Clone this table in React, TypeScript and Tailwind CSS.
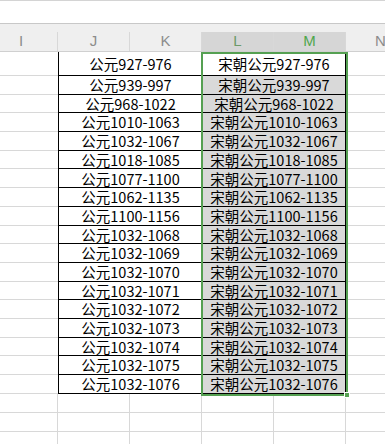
import React from "react"

const rows = [
  "927-976",
  "939-997",
  "968-1022",
  "1010-1063",
  "1032-1067",
  "1018-1085",
  "1077-1100",
  "1062-1135",
  "1100-1156",
  "1032-1068",
  "1032-1069",
  "1032-1070",
  "1032-1071",
  "1032-1072",
  "1032-1073",
  "1032-1074",
  "1032-1075",
  "1032-1076",
]

const cellFont = { fontFamily: '"Noto Sans CJK SC", "Noto Sans", sans-serif' }
const headFont = { fontFamily: '"Liberation Sans", Arial, sans-serif' }

function HeaderCell({ label, active, green }: { label: string; active?: boolean; green?: string }) {
  return (
    <div
      className={`w-[72px] shrink-0 h-full flex items-center justify-center border-r border-[#d8d8d8] text-[15px] ${
        active ? "bg-[#d6d6d6]" : ""
      }`}
      style={{ ...headFont, color: green ?? "#8c8c8c" }}
    >
      {label}
    </div>
  )
}

export default function App() {
  return (
    <div className="relative w-[385px] h-[444px] overflow-hidden bg-white">
      {/* toolbar strip */}
      <div className="h-[23px] border-t border-[#d4d4d4] bg-white" />
      <div className="h-[9px] border-t border-[#c8c8c8] bg-[#efefef]" />

      {/* column header */}
      <div className="flex h-[20px] bg-[#efefef] border-b border-[#d0d0d0]">
        <div className="w-[58px] shrink-0 h-full flex items-center pl-[19px] border-r border-[#d8d8d8] text-[15px] text-[#8c8c8c]" style={headFont}>
          I
        </div>
        <HeaderCell label="J" />
        <HeaderCell label="K" />
        <HeaderCell label="L" active green="#6d9a6a" />
        <HeaderCell label="M" active green="#4fa64c" />
        <div className="w-[39px] shrink-0 overflow-hidden flex items-center pl-[29px] text-[15px] text-[#8c8c8c]" style={headFont}>
          N
        </div>
      </div>

      {/* data rows */}
      {rows.map((r, i) => (
        <div key={r} className={`flex ${i === 0 ? "h-[24px]" : "h-[18.7px]"}`}>
          <div className="w-[58px] shrink-0 border-b border-[#d8d8d8]" />
          <div
            className="w-[144px] shrink-0 flex items-center justify-center pt-px border-l border-b border-black text-[14.5px] leading-none text-black"
            style={cellFont}
          >
            公元{r}
          </div>
          <div
            className={`w-[144px] shrink-0 flex items-center justify-center pt-px border-l border-r border-b border-black text-[14.5px] leading-none text-black ${
              i === 0 ? "bg-white" : "bg-[#d9d9d9]"
            }`}
            style={cellFont}
          >
            宋朝公元{r}
          </div>
          <div className="flex-1 border-b border-[#d8d8d8]" />
        </div>
      ))}

      {/* empty rows */}
      {[0, 1, 2].map((k) => (
        <div key={k} className="flex h-[19px]">
          <div className="w-[58px] shrink-0 border-r border-b border-[#d8d8d8]" />
          <div className="w-[72px] shrink-0 border-r border-b border-[#d8d8d8]" />
          <div className="w-[72px] shrink-0 border-r border-b border-[#d8d8d8]" />
          <div className="w-[72px] shrink-0 border-r border-b border-[#d8d8d8]" />
          <div className="w-[72px] shrink-0 border-r border-b border-[#d8d8d8]" />
          <div className="flex-1 border-b border-[#d8d8d8]" />
        </div>
      ))}

      {/* selection */}
      <div className="absolute left-[201px] top-[52px] w-[147px] h-[344px] border-[2.5px] border-[#55a052] pointer-events-none" />
      <div className="absolute left-[344px] top-[392px] w-[6px] h-[6px] bg-[#55a052] border border-white" />
    </div>
  )
}
